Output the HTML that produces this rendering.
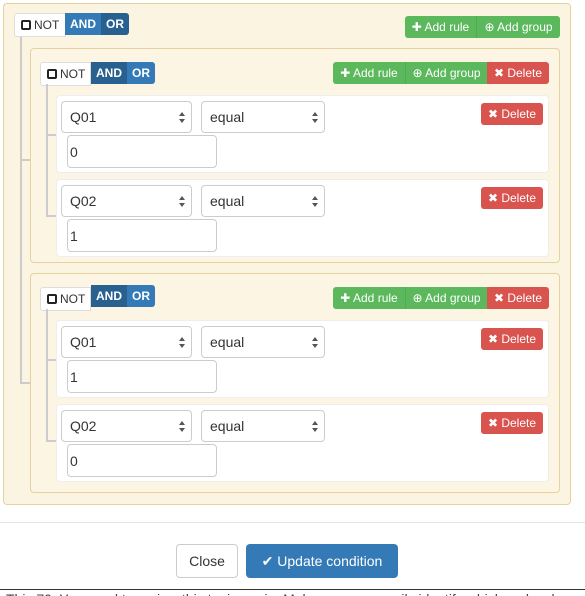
<!DOCTYPE html>
<html><head><meta charset="utf-8"><style>
*{box-sizing:border-box;margin:0;padding:0}
body{width:585px;height:596px;background:#fff;font-family:"Liberation Sans",sans-serif;position:relative;overflow:hidden}
.a{position:absolute}
.grp{position:absolute;background:#fbf4e0;border:1px solid #e6d29f;border-radius:4px}
.grp.in{background:#fcf5e3}
.rule{position:absolute;background:#fff;border:1px solid #eee;border-radius:4px}
.sel{position:absolute;height:32px;border:1px solid #ccc;border-radius:4px;background:#fff;font-size:14px;color:#333;padding:7px 8px;}
.sel:after{content:"";position:absolute;right:6px;top:10px;border:3px solid transparent;border-bottom:4px solid #555;border-top:0}
.sel:before{content:"";position:absolute;right:6px;top:17px;border:3px solid transparent;border-top:4px solid #555;border-bottom:0}
.inp{position:absolute;height:33px;border:1px solid #ccc;border-radius:4px;background:#fff;font-size:14px;color:#333;padding:8px 2px}
.btn{position:absolute;height:22px;font-size:12px;color:#fff;line-height:22px;text-align:center;white-space:nowrap}
.g{background:#5cb85c}
.r{background:#d9534f;border-radius:3px}
.b1{background:#337ab7;font-weight:bold}.b2{background:#286090;font-weight:bold}
.not{position:absolute;height:24px;background:#fff;border:1px solid #ddd;border-radius:3px 0 0 3px;font-size:12px;color:#333;line-height:22px;padding-left:6px}
.not i{display:inline-block;width:10px;height:10px;border:2px solid #222;border-radius:2px;vertical-align:-1px;margin-right:3px}
.vl{position:absolute;background:#ccc}
</style></head><body>
<div class="grp" style="left:3px;top:3px;width:568px;height:502px"></div>
<div class="vl" style="left:20px;top:37px;width:2px;height:347px"></div>
<div class="vl" style="left:20px;top:159px;width:10px;height:2px"></div>
<div class="vl" style="left:20px;top:382px;width:10px;height:2px"></div>
<div class="not" style="left:14px;top:13px;width:52px"><i></i>NOT</div>
<div class="btn b1" style="left:65px;top:13px;width:36px;border-radius:0">AND</div>
<div class="btn b2" style="left:101px;top:13px;width:28px;border-radius:0 3px 3px 0">OR</div>
<div class="btn g" style="left:405px;top:16px;width:72px;border-radius:3px 0 0 3px;border-right:1px solid #4cae4c">✚ Add rule</div>
<div class="btn g" style="left:477px;top:16px;width:83px;border-radius:0 3px 3px 0">⊕ Add group</div>

<div class="grp in" style="left:30px;top:48px;width:530px;height:215px"></div>
<div class="not" style="left:40px;top:62px;width:51px"><i></i>NOT</div>
<div class="btn b2" style="left:91px;top:62px;width:36px">AND</div>
<div class="btn b1" style="left:127px;top:62px;width:28px;border-radius:0 3px 3px 0">OR</div>
<div class="btn g" style="left:333px;top:62px;width:73px;border-radius:3px 0 0 3px;border-right:1px solid #4cae4c">✚ Add rule</div>
<div class="btn g" style="left:406px;top:62px;width:81px">⊕ Add group</div>
<div class="btn r" style="left:487px;top:62px;width:62px;border-radius:0 3px 3px 0">✖ Delete</div>
<div class="vl" style="left:46px;top:84px;width:2px;height:133px"></div>
<div class="vl" style="left:46px;top:134px;width:10px;height:2px"></div>
<div class="vl" style="left:46px;top:215px;width:10px;height:2px"></div>
<div class="rule" style="left:56px;top:95px;width:493px;height:78px"></div>
<div class="sel" style="left:61px;top:101px;width:131px">Q01</div>
<div class="sel" style="left:201px;top:101px;width:124px">equal</div>
<div class="inp" style="left:67px;top:135px;width:150px">0</div>
<div class="btn r" style="left:481px;top:103px;width:62px">✖ Delete</div>
<div class="rule" style="left:56px;top:179px;width:493px;height:78px"></div>
<div class="sel" style="left:61px;top:185px;width:131px">Q02</div>
<div class="sel" style="left:201px;top:185px;width:124px">equal</div>
<div class="inp" style="left:67px;top:219px;width:150px">1</div>
<div class="btn r" style="left:481px;top:187px;width:62px">✖ Delete</div>

<div class="grp in" style="left:30px;top:273px;width:530px;height:220px"></div>
<div class="not" style="left:40px;top:287px;width:51px"><i></i>NOT</div>
<div class="btn b2" style="left:91px;top:285px;width:36px">AND</div>
<div class="btn b1" style="left:127px;top:285px;width:28px;border-radius:0 3px 3px 0">OR</div>
<div class="btn g" style="left:333px;top:287px;width:73px;border-radius:3px 0 0 3px;border-right:1px solid #4cae4c">✚ Add rule</div>
<div class="btn g" style="left:406px;top:287px;width:81px">⊕ Add group</div>
<div class="btn r" style="left:487px;top:287px;width:62px;border-radius:0 3px 3px 0">✖ Delete</div>
<div class="vl" style="left:46px;top:309px;width:2px;height:133px"></div>
<div class="vl" style="left:46px;top:359px;width:10px;height:2px"></div>
<div class="vl" style="left:46px;top:440px;width:10px;height:2px"></div>
<div class="rule" style="left:56px;top:320px;width:493px;height:78px"></div>
<div class="sel" style="left:61px;top:326px;width:131px">Q01</div>
<div class="sel" style="left:201px;top:326px;width:124px">equal</div>
<div class="inp" style="left:67px;top:360px;width:150px">1</div>
<div class="btn r" style="left:481px;top:328px;width:62px">✖ Delete</div>
<div class="rule" style="left:56px;top:404px;width:493px;height:78px"></div>
<div class="sel" style="left:61px;top:410px;width:131px">Q02</div>
<div class="sel" style="left:201px;top:410px;width:124px">equal</div>
<div class="inp" style="left:67px;top:444px;width:150px">0</div>
<div class="btn r" style="left:481px;top:412px;width:62px">✖ Delete</div>

<div class="a" style="left:0;top:522px;width:585px;height:1px;background:#e5e5e5"></div>
<div class="a" style="left:176px;top:544px;width:62px;height:34px;border:1px solid #ccc;border-radius:4px;font-size:14px;color:#333;text-align:center;line-height:32px">Close</div>
<div class="a" style="left:246px;top:544px;width:152px;height:34px;background:#337ab7;border-radius:4px;font-size:14px;color:#fff;text-align:center;line-height:34px">✔ Update condition</div>
<div class="a" style="left:0;top:589px;width:585px;height:7px;overflow:hidden;border-top:1px solid #333">
<div style="font-size:14px;color:#444;white-space:nowrap;margin-top:1px;padding-left:6px">This 70, You need to review this topic again. Make sure you easily identify which molecules are</div></div>
</body></html>
